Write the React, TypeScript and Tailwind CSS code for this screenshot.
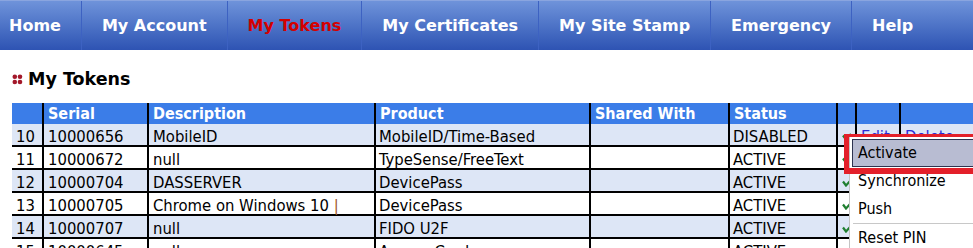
import React from "react";

const navItems = ["Home", "My Account", "My Tokens", "My Certificates", "My Site Stamp", "Emergency", "Help"];

const rows = [
  { n: "10", serial: "10000656", desc: "MobileID", product: "MobileID/Time-Based", status: "DISABLED", links: true },
  { n: "11", serial: "10000672", desc: "null", product: "TypeSense/FreeText", status: "ACTIVE" },
  { n: "12", serial: "10000704", desc: "DASSERVER", product: "DevicePass", status: "ACTIVE" },
  { n: "13", serial: "10000705", desc: "Chrome on Windows 10", cursor: true, product: "DevicePass", status: "ACTIVE" },
  { n: "14", serial: "10000707", desc: "null", product: "FIDO U2F", status: "ACTIVE" },
  { n: "15", serial: "10000645", desc: "null", product: "Access Card", status: "ACTIVE" },
];

function Check() {
  return (
    <svg width="10" height="8" viewBox="0 0 10 8" className="mt-[9px] ml-[4px]">
      <path d="M1 2.5 L4 6.5 L9 1" stroke="#1f7f30" strokeWidth="2.2" fill="none" />
    </svg>
  );
}

function Dots() {
  return (
    <svg width="11" height="11" viewBox="0 0 11 11">
      <circle cx="2.8" cy="2.8" r="2.3" fill="#a3182a" />
      <circle cx="8" cy="2.8" r="2.3" fill="#a3182a" />
      <circle cx="2.8" cy="8" r="2.3" fill="#a3182a" />
      <circle cx="8" cy="8" r="2.3" fill="#a3182a" />
    </svg>
  );
}

export default function App() {
  return (
    <div className="relative w-[973px] h-[248px] overflow-hidden bg-white [font-family:'DejaVu_Sans',Verdana,sans-serif]">
      {/* Nav */}
      <div className="h-[50px] flex items-stretch bg-gradient-to-b from-[#6f93da] to-[#2e53b3] border-t border-[#8aa5df]">
        {navItems.map((item, i) => (
          <React.Fragment key={item}>
            {i > 0 && <div className="w-px bg-[#3d62c2]" />}
            <div
              className={`flex items-center ${i === 0 ? "pl-[9px] pr-[20px]" : "px-[20px]"} text-[16px] font-bold whitespace-nowrap ${
                item === "My Tokens" ? "text-[#d40000]" : "text-white"
              }`}
            >
              {item}
            </div>
          </React.Fragment>
        ))}
      </div>

      <div className="pl-[12px]">
        {/* Title */}
        <div className="mt-[19px] h-[20px] flex items-center">
          <div className="w-[16px] flex items-center">
            <Dots />
          </div>
          <div className="text-[17.5px] font-bold text-black leading-[20px]">My Tokens</div>
        </div>

        {/* Table */}
        <div className="mt-[14px] w-[1000px] text-[16.5px] text-black [font-family:'DejaVu_Sans_Condensed','DejaVu_Sans',sans-serif] [font-stretch:condensed]">
          <div className="flex h-[21px] bg-[#3b7de8] text-white font-bold text-[16px] leading-[21px]">
            <div className="w-[32px] border-r-2 border-black" />
            <div className="w-[105px] pl-[4px] border-r-2 border-black">Serial</div>
            <div className="w-[227px] pl-[4px] border-r-2 border-black">Description</div>
            <div className="w-[215px] pl-[4px] border-r-2 border-black">Product</div>
            <div className="w-[139px] pl-[4px] border-r-2 border-black">Shared With</div>
            <div className="w-[108px] pl-[4px] border-r-2 border-black">Status</div>
            <div className="w-[19px] border-r-2 border-black" />
            <div className="w-[44px] border-r-2 border-black" />
            <div className="flex-1" />
          </div>
          {rows.map((r, i) => (
            <div
              key={r.n}
              className={`flex h-[23px] border-b-2 border-black leading-[21px] ${i % 2 === 0 ? "bg-[#dde6f6]" : "bg-white"}`}
            >
              <div className="w-[32px] pl-[4px] pt-[2px] border-r-2 border-black">{r.n}</div>
              <div className="w-[105px] pl-[4px] pt-[2px] border-r-2 border-black">{r.serial}</div>
              <div className="w-[227px] pl-[4px] pt-[2px] border-r-2 border-black whitespace-nowrap">
                {r.desc}
                {r.cursor && <span className="text-[#a0561e]"> |</span>}
              </div>
              <div className="w-[215px] pl-[3px] pt-[2px] border-r-2 border-black whitespace-nowrap">{r.product}</div>
              <div className="w-[139px] border-r-2 border-black" />
              <div className="w-[108px] pl-[3px] pt-[2px] border-r-2 border-black">{r.status}</div>
              <div className="w-[19px] border-r-2 border-black">
                <Check />
              </div>
              <div className="w-[44px] pl-[4px] pt-[2px] border-r-2 border-black">
                {r.links && <span className="text-[#2b2bd8] underline">Edit</span>}
              </div>
              <div className="flex-1 pl-[4px] pt-[2px]">
                {r.links && <span className="text-[#2b2bd8] underline">Delete</span>}
              </div>
            </div>
          ))}
        </div>
      </div>

      {/* Context menu */}
      <div className="absolute left-[849px] top-[136px] w-[200px] bg-white border border-[#c4c4c4] p-[2px] text-[16px] text-black [font-family:'DejaVu_Sans_Condensed','DejaVu_Sans',sans-serif] [font-stretch:condensed]">
        <div className="h-[28px] flex items-center pl-[5px] bg-[#b8bcd2] border border-[#2d3350]">Activate</div>
        <div className="h-[28px] flex items-center pl-[6px]">Synchronize</div>
        <div className="h-[28px] flex items-center pl-[6px]">Push</div>
        <div className="h-px bg-[#c8c8c8] ml-[1px]" />
        <div className="h-[28px] flex items-center pl-[6px]">Reset PIN</div>
      </div>

      {/* Red annotation */}
      <div className="absolute left-[844px] top-[134px] w-[200px] h-[40px] border-l-[5px] border-t-[3px] border-b-[6px] border-[#e3202a]" />
    </div>
  );
}
